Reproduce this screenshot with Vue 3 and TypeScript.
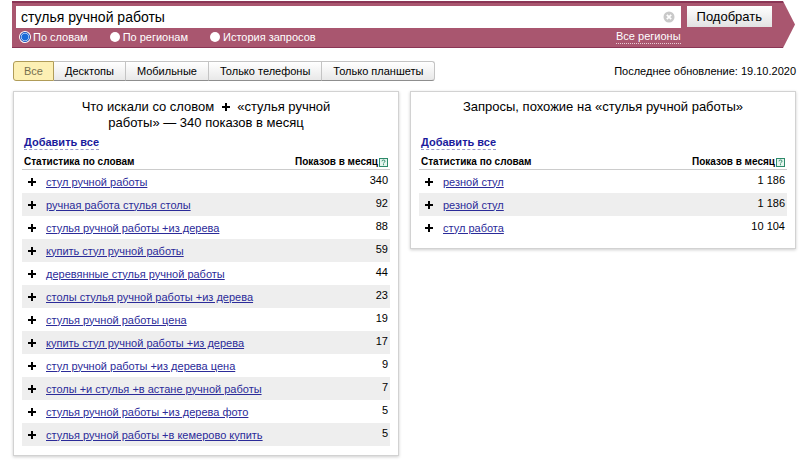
<script setup lang="ts">
import { ref } from 'vue'

interface Row {
  phrase: string
  count: string
}

interface Panel {
  id: string
  title: string[]
  rows: Row[]
}

const query = ref('стулья ручной работы')
const mode = ref('words')
const device = ref('Все')

const modes = [
  { id: 'words', label: 'По словам' },
  { id: 'regions', label: 'По регионам' },
  { id: 'history', label: 'История запросов' },
]

const devices = ['Все', 'Десктопы', 'Мобильные', 'Только телефоны', 'Только планшеты']

const panels: Panel[] = [
  {
    id: 'searched',
    title: ['Что искали со словом', '«стулья ручной работы» — 340 показов в месяц'],
    rows: [
      { phrase: 'стул ручной работы', count: '340' },
      { phrase: 'ручная работа стулья столы', count: '92' },
      { phrase: 'стулья ручной работы +из дерева', count: '88' },
      { phrase: 'купить стул ручной работы', count: '59' },
      { phrase: 'деревянные стулья ручной работы', count: '44' },
      { phrase: 'столы стулья ручной работы +из дерева', count: '23' },
      { phrase: 'стулья ручной работы цена', count: '19' },
      { phrase: 'купить стул ручной работы +из дерева', count: '17' },
      { phrase: 'стул ручной работы +из дерева цена', count: '9' },
      { phrase: 'столы +и стулья +в астане ручной работы', count: '7' },
      { phrase: 'стулья ручной работы +из дерева фото', count: '5' },
      { phrase: 'стулья ручной работы +в кемерово купить', count: '5' },
    ],
  },
  {
    id: 'similar',
    title: ['Запросы, похожие на «стулья ручной работы»'],
    rows: [
      { phrase: 'резной стул', count: '1 186' },
      { phrase: 'резной стул', count: '1 186' },
      { phrase: 'стул работа', count: '10 104' },
    ],
  },
]
</script>

<template>
  <div class="page">
    <form class="search" @submit.prevent>
      <div class="fields">
        <div class="line">
          <input v-model="query" class="query" type="text" aria-label="Запрос" />
          <button class="clear" type="button" aria-label="Очистить" @click="query = ''">
            <svg viewBox="0 0 12 12" width="12" height="12">
              <circle cx="6" cy="6" r="5.5" fill="#c9c9c9" />
              <path d="M3.8 3.8l4.4 4.4M8.2 3.8l-4.4 4.4" stroke="#fff" stroke-width="1.7" />
            </svg>
          </button>
        </div>
        <div class="options">
          <label v-for="m in modes" :key="m.id" class="mode">
            <input v-model="mode" type="radio" name="mode" :value="m.id" />
            <span>{{ m.label }}</span>
          </label>
          <a class="regions" href="#">Все регионы</a>
        </div>
      </div>
      <button class="submit" type="submit">Подобрать</button>
    </form>

    <div class="toolbar">
      <div class="tabs">
        <button
          v-for="d in devices"
          :key="d"
          type="button"
          class="tab"
          :class="{ active: d === device }"
          @click="device = d"
        >{{ d }}</button>
      </div>
      <span class="updated">Последнее обновление: 19.10.2020</span>
    </div>

    <main class="panels">
      <section v-for="p in panels" :key="p.id" class="panel">
        <h2 class="title">
          <template v-for="(part, i) in p.title" :key="i">
            <svg v-if="i > 0" class="title-plus" viewBox="0 0 8 8" width="8" height="8">
              <path d="M4 0v8M0 4h8" stroke="#000" stroke-width="2" />
            </svg>{{ part }}
          </template>
        </h2>
        <a class="add-all" href="#">Добавить все</a>
        <table class="stats">
          <thead>
            <tr>
              <th colspan="2">Статистика по словам</th>
              <th class="shows">
                <span class="shows-label">Показов в месяц<svg viewBox="0 0 9 9" width="9" height="9">
                  <rect x="0.5" y="0.5" width="8" height="8" fill="#e6f5ee" stroke="#2d8a6a" />
                  <path d="M3 3.3q0-1.3 1.5-1.3T6 3.2q0 .8-.8 1.2-.7.3-.7 1M4.500 6.200v1" fill="none" stroke="#2d8a6a" />
                </svg></span>
              </th>
            </tr>
          </thead>
          <tbody>
            <tr v-for="(r, i) in p.rows" :key="i">
              <td class="add">
                <button type="button" class="plus" aria-label="Добавить">
                  <svg viewBox="0 0 8 8" width="8" height="8">
                    <path d="M4 0v8M0 4h8" stroke="#000" stroke-width="2" />
                  </svg>
                </button>
              </td>
              <td class="phrase"><a href="#">{{ r.phrase }}</a></td>
              <td class="count">{{ r.count }}</td>
            </tr>
          </tbody>
        </table>
      </section>
    </main>
  </div>
</template>

<style>
body {
  margin: 0;
  background: #fff;
}
</style>

<style scoped>
.page {
  padding: 1px 4px 8px 12px;
  font-family: "Liberation Sans", Arial, sans-serif;
  font-size: 11px;
  color: #000;
}

button,
input {
  font-family: inherit;
  margin: 0;
}

.search {
  display: flex;
  align-items: flex-start;
  gap: 6px;
  box-sizing: border-box;
  height: 47px;
  padding: 5px 23px 0 4px;
  margin-right: 1px;
  background: linear-gradient(#8a3555 0 2px, #a9566f 2px 46px, #8a3555 46px);
  clip-path: polygon(0 0, calc(100% - 12px) 0, 100% 50%, calc(100% - 12px) 100%, 0 100%);
}

.fields {
  flex: 1;
}

.line {
  display: flex;
  align-items: center;
  height: 22px;
  background: #fff;
}

.query {
  flex: 1;
  min-width: 0;
  padding: 0 5px;
  border: 0;
  outline: 0;
  background: transparent;
  font-size: 14px;
  color: #000;
}

.clear {
  display: flex;
  padding: 0 6px;
  border: 0;
  background: none;
}

.options {
  display: flex;
  align-items: center;
  gap: 22px;
  height: 18px;
  padding-left: 4px;
  color: #fff;
}

.mode {
  display: flex;
  align-items: center;
  gap: 3px;
}

.mode input {
  appearance: none;
  box-sizing: border-box;
  width: 10px;
  height: 10px;
  border-radius: 50%;
  background: #fff;
}

.mode input:checked {
  border: 1px solid #1a6ad8;
  background: radial-gradient(circle, #1a6ad8 0 3px, #fff 4px);
  box-shadow: 0 0 0 1px #fff;
}

.regions {
  margin-left: auto;
  color: #fff;
  line-height: 13px;
  text-decoration: none;
  border-bottom: 1px dotted #e8cdd6;
}

.submit {
  height: 21px;
  padding: 0 10px;
  border: 0;
  background: linear-gradient(#fff, #e2e2e2);
  font-size: 13px;
  color: #000;
}

.toolbar {
  display: flex;
  align-items: center;
  justify-content: space-between;
  margin-top: 13px;
  padding-left: 1px;
}

.tabs {
  display: flex;
}

.tab {
  height: 20px;
  padding: 0 11px;
  border: 1px solid #c4c4c4;
  border-bottom-color: #8e8e8e;
  border-left-width: 0;
  background: linear-gradient(#fff, #e8e8e8);
  font-size: 11px;
  line-height: 18px;
  color: #000;
}

.tab:last-child {
  border-radius: 0 3px 3px 0;
}

.tab.active {
  padding: 0 10px;
  border: 1px solid #b09c58;
  border-radius: 3px 0 0 3px;
  background: #fdf0b4;
  color: #77704f;
}

.panels {
  display: grid;
  grid-template-columns: 1fr 1fr;
  align-items: start;
  gap: 11px;
  margin-top: 10px;
  padding-left: 1px;
}

.panel {
  padding: 7px 8px 9px;
  border: 1px solid #d2d2d2;
  box-shadow: 0 1px 3px rgba(0, 0, 0, 0.2);
}

.title {
  height: 32px;
  margin: 0;
  padding: 0 40px;
  font-size: 13px;
  font-weight: 400;
  line-height: 16px;
  text-align: center;
}

.title-plus {
  margin: 0 7px 0 8px;
}

.add-all {
  display: inline-block;
  margin: 5px 0 0 2px;
  border-bottom: 1px dashed #9a9ac8;
  font-weight: 700;
  line-height: 13px;
  color: #1a1a9c;
  text-decoration: none;
}

.stats {
  width: 100%;
  border-collapse: collapse;
}

.stats th {
  height: 19px;
  padding: 0 2px;
  border-bottom: 1px solid #ccc;
  font-size: 10px;
  line-height: 14px;
  text-align: left;
  vertical-align: bottom;
  white-space: nowrap;
}

.stats .shows {
  text-align: right;
}

.shows-label {
  display: inline-flex;
  align-items: center;
  gap: 1px;
}

.stats td {
  height: 23px;
  padding: 0;
}

.stats tbody tr:nth-child(even) {
  background: #eee;
}

.stats .add {
  width: 24px;
}

.plus {
  display: flex;
  padding: 0 6px;
  border: 0;
  background: none;
}

.phrase a {
  color: #2b2b99;
}

.stats .count {
  padding: 0 2px 4px 0;
  box-sizing: border-box;
  text-align: right;
  white-space: nowrap;
}
</style>
